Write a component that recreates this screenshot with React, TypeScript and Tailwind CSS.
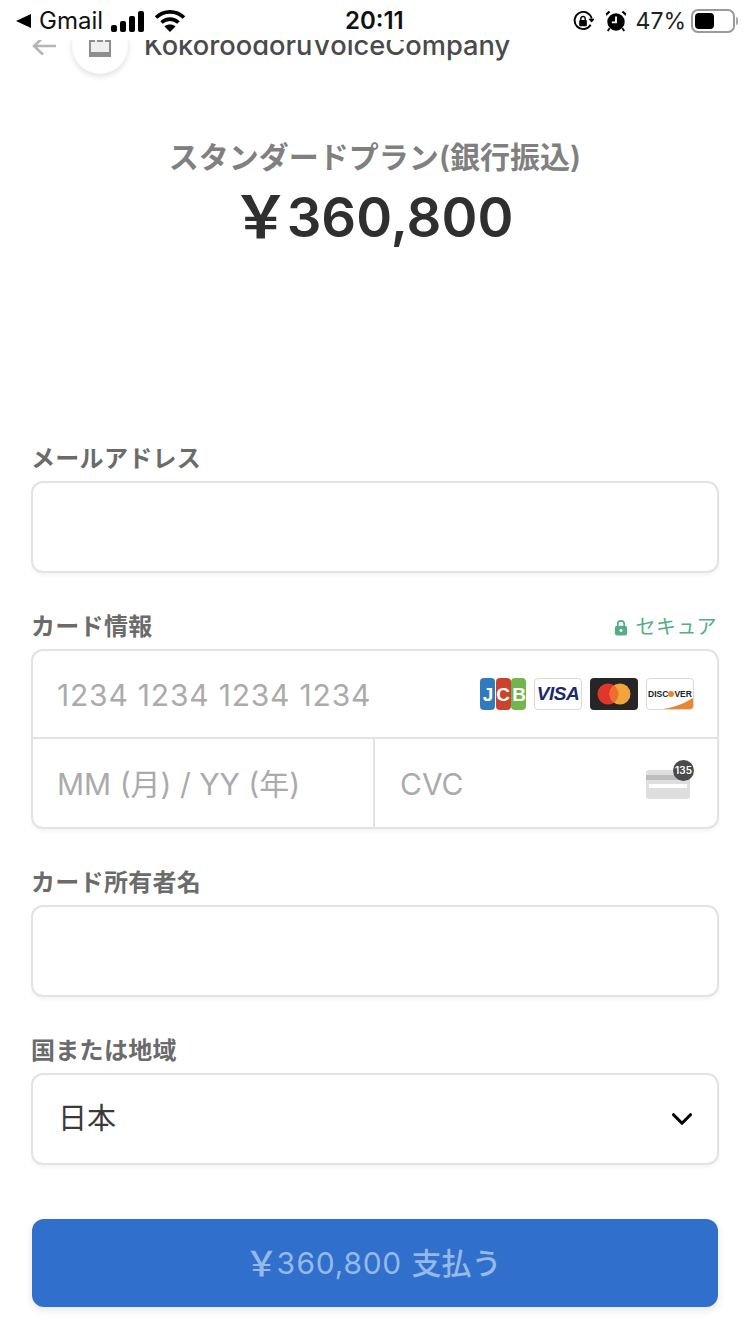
import { ChevronDown } from 'lucide-react'

const fontStack = "font-['Inter','Noto_Sans_CJK_JP',sans-serif]"

function StatusBar() {
  return (
    <div className="relative z-10 h-[40px] pt-[2px] bg-white flex items-center justify-between pl-[15px] pr-[12px] text-[24px] leading-none text-black">
      <div className="flex items-center">
        <svg width="16" height="16" viewBox="0 0 16 16"><path d="M16 1v14L1 8z" fill="#000" /></svg>
        <span className="ml-[8px] text-[#111]">Gmail</span>
        <svg className="ml-[8px]" width="34" height="22" viewBox="0 0 34 22" fill="#000">
          <rect x="0" y="15" width="6" height="7" rx="2" />
          <rect x="9" y="11" width="6" height="11" rx="2" />
          <rect x="18" y="6" width="6" height="16" rx="2" />
          <rect x="27" y="1" width="6" height="21" rx="2" />
        </svg>
        <svg className="ml-[9px]" width="32" height="24" viewBox="0 0 32 24" fill="none" stroke="#000" strokeWidth="3.6">
          <path d="M2 8.500C10 1 22 1 30 8.500" />
          <path d="M7.500 13.500C12.500 9 19.500 9 24.500 13.500" />
          <path d="M16 23l-5.500-5.500c3-2.600 8-2.600 11 0z" fill="#000" stroke="none" />
        </svg>
      </div>
      <span className="absolute left-[345px] font-semibold text-[#111]">20:11</span>
      <div className="flex items-center">
        <svg width="21" height="21" viewBox="0 0 22 22" fill="none">
          <path d="M18.500 14.500A9 9 0 1 1 19.500 8" stroke="#000" strokeWidth="2" />
          <path d="M16 8h7l-3.500 4z" fill="#000" />
          <rect x="6.500" y="9.500" width="8" height="6.500" rx="1" fill="#000" />
          <path d="M8.200 10V8a2.300 2.300 0 0 1 4.600 0v2" stroke="#000" strokeWidth="1.500" />
        </svg>
        <svg className="ml-[11px]" width="22" height="22" viewBox="0 0 24 24" fill="#000">
          <circle cx="12" cy="13" r="9.500" />
          <path d="M1.500 6.500L6 2.200 3.800 1 1 3.500zM22.500 6.500L18 2.200 20.200 1 23 3.500z" />
          <path d="M5 20l-2 3M19 20l2 3" stroke="#000" strokeWidth="2" />
          <path d="M12 7v6.500H7.500" fill="none" stroke="#fff" strokeWidth="2" />
        </svg>
        <span className="ml-[9px] text-[23px] text-[#222]">47%</span>
        <div className="ml-[5px] w-[44px] h-[24px] rounded-[7px] border-2 border-[#9a9a9a] p-[2px]">
          <div className="w-[19px] h-full rounded-[4px] bg-black" />
        </div>
        <div className="ml-[1px] w-[2px] h-[8px] rounded-r bg-[#aaa]" />
      </div>
    </div>
  )
}

function Label({ children }: { children: string }) {
  return <div className="text-[24px] leading-[32px] font-semibold tracking-[0.3px] text-[#6b6b6b]">{children}</div>
}

function TextField() {
  return <div className="mt-[6px] h-[92px] rounded-[12px] border-2 border-[#e3e3e3] bg-white shadow-[0_2px_4px_rgba(0,0,0,0.05)]" />
}

function JcbLogo() {
  return (
    <svg width="46" height="32" viewBox="0 0 46 32">
      <rect x="0" y="0" width="15" height="32" rx="4" fill="#2f7bbd" />
      <rect x="16" y="0" width="15" height="32" rx="4" fill="#c9432f" />
      <rect x="31" y="0" width="15" height="32" rx="4" fill="#72b54c" />
      <text x="8" y="23" textAnchor="middle" fontSize="19" fontWeight="700" fill="#fff" fontFamily="Liberation Sans">J</text>
      <text x="23" y="23" textAnchor="middle" fontSize="19" fontWeight="700" fill="#fff" fontFamily="Liberation Sans">C</text>
      <text x="39" y="23" textAnchor="middle" fontSize="19" fontWeight="700" fill="#fff" fontFamily="Liberation Sans">B</text>
    </svg>
  )
}

function CardLogos() {
  return (
    <div className="flex items-center gap-[8px]">
      <JcbLogo />
      <div className="w-[48px] h-[32px] rounded-[4px] border border-[#d8d8d8] bg-white flex items-center justify-center text-[19px] font-black italic text-[#1a2a6c] font-['Liberation_Sans',sans-serif] tracking-[-0.5px]">
        VISA
      </div>
      <div className="w-[48px] h-[32px] rounded-[4px] bg-[#262626] flex items-center justify-center">
        <svg width="34" height="22" viewBox="0 0 34 22">
          <circle cx="11" cy="11" r="10.500" fill="#e2362c" />
          <circle cx="23" cy="11" r="10.500" fill="#f0a43a" />
          <path d="M17 2.400a10.500 10.500 0 0 1 0 17.200 10.500 10.500 0 0 1 0-17.200z" fill="#ee6f2d" />
        </svg>
      </div>
      <div className="relative overflow-hidden w-[48px] h-[32px] rounded-[4px] border border-[#d8d8d8] bg-white flex items-center justify-center text-[8.5px] font-bold text-[#222] font-['Liberation_Sans',sans-serif]">
        <span>DISC</span>
        <span className="w-[6px] h-[6px] rounded-full bg-[#e8872f]" />
        <span>VER</span>
        <svg className="absolute right-0 bottom-0" width="30" height="11" viewBox="0 0 30 11">
          <path d="M0 11C12 9 22 5 30 0v11z" fill="#e8872f" />
        </svg>
      </div>
    </div>
  )
}

function CvcIcon() {
  return (
    <div className="relative w-[48px] h-[34px] mb-[3px]">
      <svg className="absolute left-[1px] bottom-0" width="44" height="29" viewBox="0 0 44 29">
        <rect width="44" height="29" rx="3" fill="#dedede" />
        <rect y="5" width="44" height="5" fill="#bdbdbd" />
        <rect x="3" y="14" width="38" height="4" fill="#ffffff" />
      </svg>
      <div className="absolute right-[-1px] top-[-5px] w-[21px] h-[21px] rounded-full bg-[#4a4a4a] flex items-center justify-center text-[10px] font-semibold text-white">
        135
      </div>
    </div>
  )
}

export default function App() {
  return (
    <div className={`w-[750px] h-[1334px] overflow-hidden bg-white ${fontStack}`}>
      <StatusBar />

      {/* Header, scrolled partly under the status bar */}
      <div className="-mt-[22px] h-[56px] pl-[32px] flex items-center">
        <svg width="24" height="20" viewBox="0 0 24 20" fill="none" stroke="#b5b5b5" strokeWidth="2.600">
          <path d="M24 10H2M11 1.500L2 10l9 8.500" />
        </svg>
        <div className="ml-[16px] w-[56px] h-[56px] rounded-full bg-white shadow-[0_2px_6px_rgba(0,0,0,0.14)] flex items-center justify-center">
          <svg className="mt-[2px]" width="22" height="20" viewBox="0 0 22 20">
            <rect width="22" height="20" fill="#efefef" />
            <path d="M0 0h2v20H0zM20 0h2v20h-2zM0 15h22v5H0zM0 1h6v4H0zM8 1h6v4H8zM16 1h6v4h-6z" fill="#8f8f8f" />
          </svg>
        </div>
        <span className="ml-[16px] text-[27.25px] leading-none font-medium text-[#4a4a4a]">KokoroodoruVoiceCompany</span>
      </div>

      <div className="mt-[61px] text-center text-[30px] leading-[44px] font-semibold text-[#808080]">スタンダードプラン(銀行振込)</div>
      <div className="mt-[2px] flex justify-center items-center text-[54.5px] leading-[72px] font-semibold text-[#2f2f2f]">
        <span className="text-[58px] font-bold mr-[-3px]">{'\uFFE5'}</span>
        <span className="mr-[5px]">360,800</span>
      </div>

      <div className="mt-[190px] px-[31px]">
        <Label>メールアドレス</Label>
        <TextField />

        <div className="mt-[38px] flex items-center justify-between pr-[2px]">
          <Label>カード情報</Label>
          <div className="flex items-center text-[20px] leading-[32px] tracking-[0.5px] text-[#55ad85]">
            <svg width="14" height="17" viewBox="0 0 16 18" fill="none">
              <rect x="1" y="7" width="14" height="11" rx="2.500" fill="#55ad85" />
              <path d="M4.300 8V5a3.700 3.700 0 0 1 7.400 0v3" stroke="#55ad85" strokeWidth="2" />
              <circle cx="8" cy="12.500" r="1.700" fill="#fff" />
            </svg>
            <span className="ml-[7px]">セキュア</span>
          </div>
        </div>

        <div className="mt-[6px] h-[180px] rounded-[12px] border-2 border-[#e3e3e3] bg-white shadow-[0_2px_4px_rgba(0,0,0,0.05)] flex flex-col">
          <div className="h-[88px] flex items-center justify-between pl-[24px] pr-[23px] border-b-2 border-[#e3e3e3]">
            <span className="pt-[2px] text-[30px] tracking-[0.8px] text-[#ababab]">1234 1234 1234 1234</span>
            <CardLogos />
          </div>
          <div className="flex-1 flex">
            <div className="w-[342px] flex items-center pl-[24px] pt-[2px] border-r-2 border-[#e3e3e3] text-[30px] text-[#ababab]">MM (月) / YY (年)</div>
            <div className="flex-1 flex items-center justify-between pl-[25px] pr-[24px]">
              <span className="pt-[2px] text-[30px] text-[#ababab]">CVC</span>
              <CvcIcon />
            </div>
          </div>
        </div>

        <div className="mt-[38px]">
          <Label>カード所有者名</Label>
        </div>
        <TextField />

        <div className="mt-[38px]">
          <Label>国または地域</Label>
        </div>
        <div className="mt-[6px] h-[92px] rounded-[12px] border-2 border-[#e3e3e3] bg-white shadow-[0_2px_4px_rgba(0,0,0,0.05)] flex items-center justify-between pl-[25px] pr-[18px]">
          <span className="text-[29px] text-[#3a3a3a]">日本</span>
          <ChevronDown size={34} strokeWidth={2.200} className="text-black" />
        </div>

        <div className="mt-[54px] ml-[1px] w-[686px] h-[88px] pr-[4px] rounded-[12px] bg-[#3070cc] shadow-[0_3px_8px_rgba(0,0,0,0.1)] flex items-center justify-center text-[30px] font-medium text-[#95b9e8]">
          <span className="text-[34px] mr-[-2px]">{'\uFFE5'}</span>
          <span className="tabular-nums font-normal">360,800</span>
          <span className="ml-[10px]">支払う</span>
        </div>
      </div>
    </div>
  )
}
